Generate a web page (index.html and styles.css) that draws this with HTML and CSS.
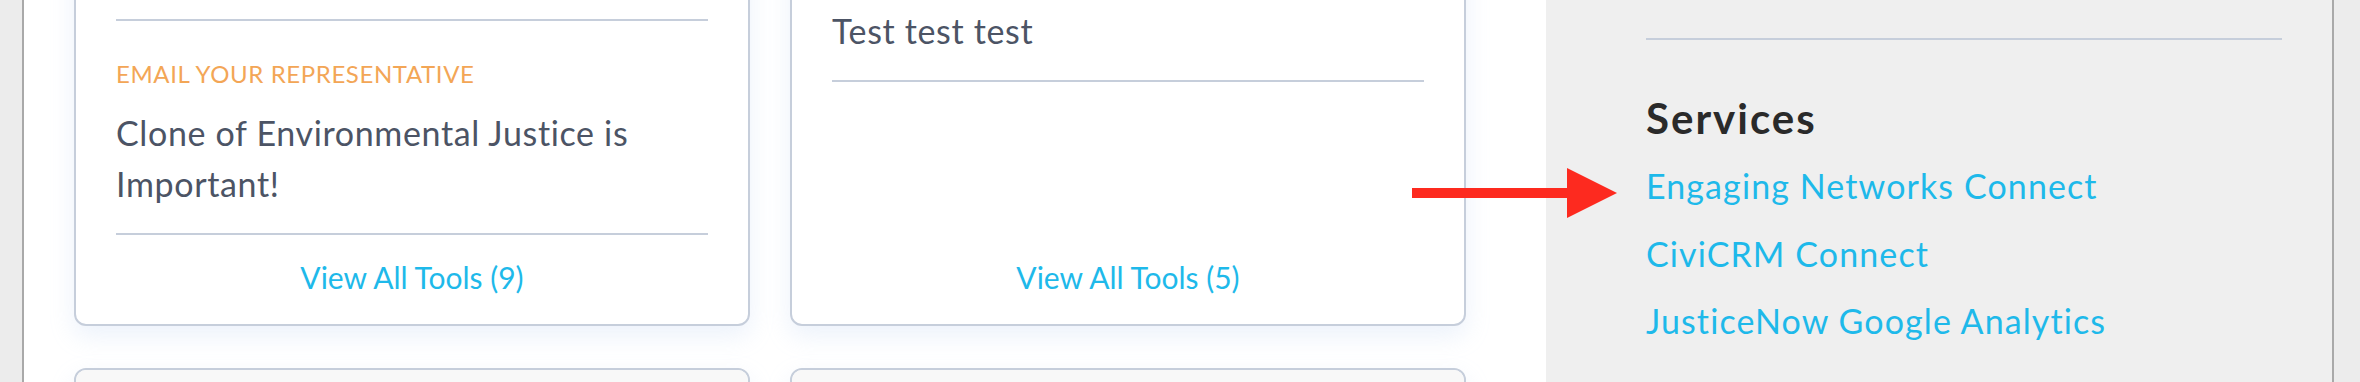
FILE: index.html
```html
<!DOCTYPE html>
<html lang="en">

<head>
    <meta charset="UTF-8">
    <title>Campaigns</title>
    <link rel="stylesheet" href="styles.css">
</head>

<body>
    <div class="window">
        <main class="main">
            <div class="cards">
                <div class="card">
                    <div class="tools">
                        <div class="tool">
                            <div class="tool-type">Petition</div>
                            <div class="tool-name">Tell Congress to protect clean air and water in every community
                                across the country today</div>
                        </div>
                        <div class="tool">
                            <div class="tool-type">Email Your Representative</div>
                            <div class="tool-name">Clone of Environmental Justice is Important!</div>
                        </div>
                    </div>
                    <a class="view-all" href="#">View All Tools (9)</a>
                </div>
                <div class="card">
                    <div class="tools">
                        <div class="tool">
                            <div class="tool-type">Petition</div>
                            <div class="tool-name">Sign the petition</div>
                        </div>
                        <div class="tool">
                            <div class="tool-type">Call Your Representative</div>
                            <div class="tool-name">Test test test</div>
                        </div>
                    </div>
                    <a class="view-all" href="#">View All Tools (5)</a>
                </div>
                <div class="card">
                    <div class="card-head"></div>
                </div>
                <div class="card">
                    <div class="card-head"></div>
                </div>
            </div>
        </main>
        <aside class="sidebar">
            <section class="side-section">
                <h2>Services</h2>
                <ul class="service-list">
                    <li><a href="#">Engaging Networks Connect</a></li>
                    <li><a href="#">CiviCRM Connect</a></li>
                    <li><a href="#">JusticeNow Google Analytics</a></li>
                </ul>
            </section>
        </aside>
    </div>
    <svg class="arrow" width="205" height="50" viewBox="0 0 205 50">
        <rect x="0" y="20" width="156" height="10" fill="#fd2a1f" />
        <polygon points="155,0 205,25 155,50" fill="#fd2a1f" />
    </svg>
</body>

</html>
```

FILE: styles.css
```css
body {
    margin: 0;
    background: #ececec;
    font-family: 'Lato', 'Open Sans', sans-serif;
}

a {
    color: #1eb9ea;
    text-decoration: none;
}

.window {
    display: flex;
    height: 100vh;
    overflow: hidden;
    margin: 0 26px 0 22px;
    border-left: 2px solid #a9a9a9;
    border-right: 2px solid #a9a9a9;
}

.main {
    flex: 0 0 1522px;
    background: #fff;
    padding: 0 80px 0 50px;
    box-sizing: border-box;
}

.cards {
    display: grid;
    grid-template-columns: 1fr 1fr;
    column-gap: 40px;
    row-gap: 42px;
    margin-top: -246px;
}

.card {
    display: flex;
    flex-direction: column;
    background: #fff;
    border: 2px solid #c6cedb;
    border-radius: 12px;
    padding: 0 40px;
    box-shadow: 0 10px 24px rgba(170, 195, 235, 0.22);
}

.card-head {
    height: 300px;
    margin: 0 -40px;
    border-radius: 10px 10px 0 0;
    background: #f8f8f8;
}

.tools {
    flex: 1;
}

.tool {
    padding: 38px 0 24px;
    border-bottom: 2px solid #c6cedb;
}

.tool-type {
    font-size: 24px;
    line-height: 30px;
    margin-bottom: 18px;
    letter-spacing: 0.6px;
    color: #f3a656;
    text-transform: uppercase;
}

.tool-name {
    font-size: 34px;
    line-height: 51px;
    letter-spacing: 0.65px;
    color: #4c5465;
}

.view-all {
    display: block;
    padding: 22px 0 27px;
    font-size: 30px;
    line-height: 40px;
    text-align: center;
}

.sidebar {
    flex: 1;
    background: #efefef;
    padding: 38px 50px 0 100px;
}

.side-section {
    border-top: 2px solid #c6cedb;
}

.side-section h2 {
    margin: 54px 0 10px;
    font-size: 42px;
    line-height: 48px;
    font-weight: 700;
    letter-spacing: 2px;
    color: #2a2a2a;
}

.service-list {
    list-style: none;
    margin: 0;
    padding: 0;
}

.service-list li {
    font-size: 34px;
    line-height: 67.5px;
    letter-spacing: 1.1px;
}

.arrow {
    position: absolute;
    left: 1412px;
    top: 168px;
}
```
